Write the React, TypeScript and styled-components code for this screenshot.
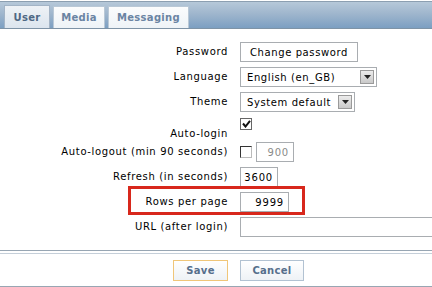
import React from 'react';
import styled, { createGlobalStyle } from 'styled-components';

const GlobalStyle = createGlobalStyle`
  html, body { margin: 0; padding: 0; background: #ffffff; }
  body { font-family: "DejaVu Sans", Verdana, sans-serif; font-size: 10px; color: #000; }
`;

const Page = styled.div`
  width: 432px;
  height: 287px;
  overflow: hidden;
  display: flex;
  flex-direction: column;
`;

const TabBar = styled.div`
  margin-top: 1px;
  height: 27px;
  border-top: 1px solid #8c9fb1;
  border-bottom: 1px solid #7e93a6;
  background: linear-gradient(#b6c8d9, #9fb6cd 45%, #7c9fc2);
  display: flex;
  align-items: flex-end;
  padding-left: 4px;
  gap: 3px;
`;

const Tab = styled.div<{ $active?: boolean; $w: number }>`
  width: ${p => p.$w}px;
  height: ${p => (p.$active ? 23 : 22)}px;
  box-sizing: border-box;
  display: flex;
  align-items: center;
  justify-content: center;
  font-weight: bold;
  font-size: 10px;
  letter-spacing: 0.3px;
  color: ${p => (p.$active ? '#4f6884' : '#6a84a3')};
  border: 1px solid ${p => (p.$active ? '#a3b4c6' : '#b9c8d6')};
  border-bottom: none;
  background: ${p => (p.$active
    ? 'linear-gradient(#eef2f6, #dce5ee)'
    : 'linear-gradient(#fbfcfd, #eef3f7)')};
`;

const Form = styled.div`
  padding-top: 13px;
  display: flex;
  flex-direction: column;
  gap: 5px;
`;

const Row = styled.div<{ $tall?: boolean }>`
  position: relative;
  display: flex;
  align-items: ${p => (p.$tall ? 'stretch' : 'center')};
  height: 20px;
  gap: 12px;
`;

const Label = styled.div<{ $bottom?: boolean }>`
  width: 228px;
  flex: none;
  text-align: right;
  letter-spacing: 0.65px;
  align-self: ${p => (p.$bottom ? 'flex-end' : 'center')};
  line-height: 12px;
  margin-bottom: ${p => (p.$bottom ? -3 : 0)}px;
`;

const Control = styled.div`
  display: flex;
  align-items: center;
  gap: 4px;
`;

const Button = styled.div`
  height: 18px;
  border: 1px solid #a9adb1;
  background: #fff;
  padding: 0 9px;
  display: flex;
  align-items: center;
  letter-spacing: 0.6px;
`;

const Select = styled.div<{ $w: number }>`
  width: ${p => p.$w}px;
  height: 18px;
  border: 1px solid #a9adb1;
  background: #fff;
  box-sizing: content-box;
  display: flex;
  align-items: center;
  justify-content: space-between;
  padding-left: 6px;
  padding-right: 2px;
  letter-spacing: 0.6px;
`;

const Arrow = styled.div`
  width: 12px;
  height: 12px;
  border: 1px solid #9a9a9a;
  background: linear-gradient(#ececec, #c9c9c9);
  display: flex;
  align-items: center;
  justify-content: center;
`;

const Check = styled.div<{ $inset?: boolean }>`
  width: 10px;
  height: 10px;
  border: 1px solid #666;
  border-top-color: ${p => (p.$inset ? '#333' : '#666')};
  border-left-color: ${p => (p.$inset ? '#333' : '#666')};
  border-right-color: ${p => (p.$inset ? '#bbb' : '#666')};
  border-bottom-color: ${p => (p.$inset ? '#bbb' : '#666')};
  background: #fff;
  display: flex;
  align-items: center;
  justify-content: center;
  align-self: ${p => (p.$inset ? 'center' : 'flex-start')};
  margin-top: ${p => (p.$inset ? 0 : 1)}px;
`;

const Input = styled.div<{ $w: number; $muted?: boolean; $full?: boolean }>`
  width: ${p => (p.$full ? 'auto' : `${p.$w}px`)};
  flex: ${p => (p.$full ? '1' : 'none')};
  min-width: ${p => (p.$full ? '200px' : '0')};
  height: 18px;
  border: 1px solid #a9adb1;
  box-sizing: content-box;
  padding-right: 4px;
  display: flex;
  align-items: center;
  justify-content: flex-end;
  color: ${p => (p.$muted ? '#8a8a8a' : '#000')};
  letter-spacing: 0.8px;
`;

const Highlight = styled.div`
  position: absolute;
  left: 128px;
  top: -6px;
  width: 171px;
  height: 23px;
  border: 3px solid #d8281c;
  pointer-events: none;
`;

const Footer = styled.div`
  margin-top: 13px;
  border-top: 1px solid #98a6b3;
  padding-top: 2px;
`;

const ButtonBar = styled.div`
  border-top: 1px solid #c5cfd9;
  border-bottom: 1px solid #98a6b3;
  height: 32px;
  display: flex;
  align-items: center;
  justify-content: center;
  padding-left: 45px;
  gap: 12px;
`;

const Action = styled.div<{ $primary?: boolean }>`
  height: 19px;
  width: ${p => (p.$primary ? 53 : 62)}px;
  border: 1px solid ${p => (p.$primary ? '#f0c679' : '#b2c2d2')};
  background: linear-gradient(#ffffff, #eef2f6);
  display: flex;
  align-items: center;
  justify-content: center;
  font-weight: bold;
  letter-spacing: 0.3px;
  color: #566f8c;
  margin-top: 1px;
`;

const Bottom = styled.div`
  flex: 1;
  background: #e8eef4;
`;

const ArrowIcon = () => (
  <Arrow>
    <svg width="7" height="4" viewBox="0 0 7 4"><path d="M0 0h7L3.5 4z" fill="#222" /></svg>
  </Arrow>
);

const Tick = () => (
  <svg width="9" height="8" viewBox="0 0 9 8">
    <path d="M1 3.5l2.5 3L8 0.8" stroke="#111" strokeWidth="2" fill="none" />
  </svg>
);

export default function App() {
  return (
    <Page>
      <GlobalStyle />
      <TabBar>
        <Tab $active $w={46}>User</Tab>
        <Tab $w={52}>Media</Tab>
        <Tab $w={81}>Messaging</Tab>
      </TabBar>
      <Form>
        <Row>
          <Label>Password</Label>
          <Control><Button>Change password</Button></Control>
        </Row>
        <Row>
          <Label>Language</Label>
          <Select $w={127}>English (en_GB)<ArrowIcon /></Select>
        </Row>
        <Row>
          <Label>Theme</Label>
          <Select $w={105}>System default<ArrowIcon /></Select>
        </Row>
        <Row $tall>
          <Label $bottom>Auto-login</Label>
          <Check><Tick /></Check>
        </Row>
        <Row>
          <Label>Auto-logout (min 90 seconds)</Label>
          <Control>
            <Check $inset />
            <Input $w={32} $muted>900</Input>
          </Control>
        </Row>
        <Row>
          <Label>Refresh (in seconds)</Label>
          <Input $w={32}>3600</Input>
        </Row>
        <Row>
          <Highlight />
          <Label>Rows per page</Label>
          <Input $w={43}>9999</Input>
        </Row>
        <Row>
          <Label>URL (after login)</Label>
          <Input $w={200} $full></Input>
        </Row>
      </Form>
      <Footer>
        <ButtonBar>
          <Action $primary>Save</Action>
          <Action>Cancel</Action>
        </ButtonBar>
      </Footer>
      <Bottom />
    </Page>
  );
}
